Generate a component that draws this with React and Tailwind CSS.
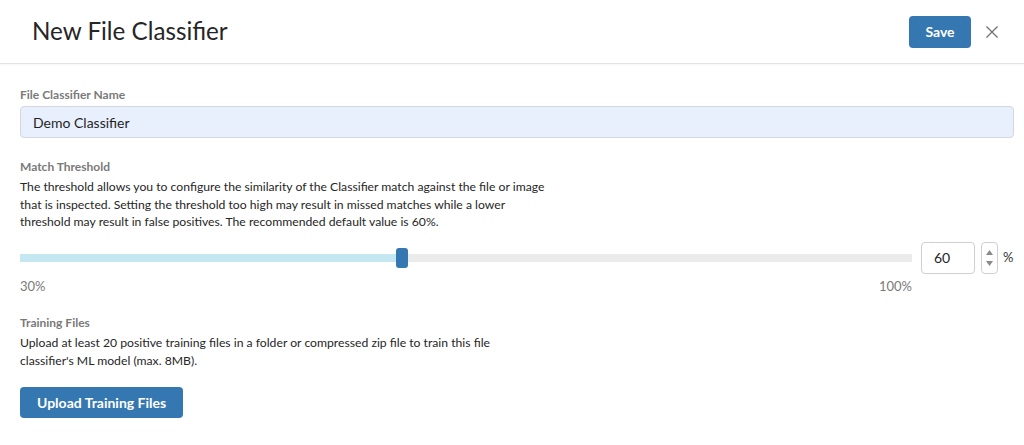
import { useState } from "react";

const MIN = 30;
const MAX = 100;

function Header() {
  return (
    <div className="flex h-[64px] items-center justify-between border-b border-[#e3e3e3] pl-[32px] pr-[26px] shadow-[0_1px_2px_rgba(0,0,0,0.04)]">
      <h1 className="text-[24.2px] font-normal leading-none text-[#262626]">New File Classifier</h1>
      <div className="flex items-center gap-[15px]">
        <button className="h-[32px] w-[62px] rounded-[4px] bg-[#3577b1] text-[14px] font-bold text-white">
          Save
        </button>
        <button className="flex h-[12px] w-[12px] items-center justify-center text-[#707070]" aria-label="Close">
          <svg width="12" height="12" viewBox="0 0 12 12" fill="none" stroke="currentColor" strokeWidth="1.3">
            <path d="M0.5 0.5l11 11M11.5 0.5l-11 11" />
          </svg>
        </button>
      </div>
    </div>
  );
}

function Label({ children }) {
  return <div className="text-[12px] font-bold leading-[16px] text-[#7a7a7a]">{children}</div>;
}

function Spinner() {
  return (
    <div className="flex h-[32px] w-[17px] shrink-0 flex-col items-center justify-center gap-[6px] rounded-[4px] border border-[#cfcfcf] bg-white">
      <svg width="7" height="5" viewBox="0 0 7 5">
        <path d="M3.5 0L7 5H0z" fill="#8a8a8a" />
      </svg>
      <svg width="7" height="5" viewBox="0 0 7 5">
        <path d="M0 0h7L3.5 5z" fill="#8a8a8a" />
      </svg>
    </div>
  );
}

function ThresholdSlider({ value }) {
  const pct = ((value - MIN) / (MAX - MIN)) * 100;
  return (
    <div>
      <div className="flex items-center">
        <div className="relative h-[8px] flex-1 bg-[#ebebeb]">
          <div className="h-full bg-[#c4e7f2]" style={{ width: `${pct}%` }} />
          <div
            className="absolute top-1/2 h-[20px] w-[12px] -translate-x-1/2 -translate-y-1/2 rounded-[3px] bg-[#3577b1]"
            style={{ left: `${pct}%` }}
          />
        </div>
        <div className="ml-[9px] flex h-[32px] w-[54px] shrink-0 items-center rounded-[4px] border border-[#cfcfcf] bg-white pl-[12px] text-[14px] text-[#262626]">
          {value}
        </div>
        <div className="ml-[6px]">
          <Spinner />
        </div>
        <span className="ml-[5px] w-[11px] shrink-0 text-[13px] text-[#333]">%</span>
      </div>
      <div className="mt-[4px] flex pr-[102px] text-[13px] leading-[17px] text-[#7a7a7a]">
        <span>30%</span>
        <span className="ml-auto">100%</span>
      </div>
    </div>
  );
}

export default function App() {
  const [name] = useState("Demo Classifier");

  return (
    <div className="h-[445px] w-[1024px] bg-white font-['Lato','Liberation_Sans',sans-serif] text-[#262626]">
      <Header />
      <div className="pl-[20px] pr-[10px] pt-[23px]">
        <Label>File Classifier Name</Label>
        <div className="mt-[3px] flex h-[32px] items-center rounded-[4px] border border-[#d4d7de] bg-[#e8f0fe] px-[12px] text-[14px] text-[#1f1f1f]">
          {name}
        </div>

        <div className="mt-[21px]">
          <Label>Match Threshold</Label>
        </div>
        <p className="mt-[3px] w-[535px] text-[12.2px] leading-[17.5px] text-[#262626]">
          The threshold allows you to configure the similarity of the Classifier match against the file or image
          that is inspected. Setting the threshold too high may result in missed matches while a lower threshold
          may result in false positives. The recommended default value is 60%.
        </p>

        <div className="mt-[11px]">
          <ThresholdSlider value={60} />
        </div>

        <div className="mt-[20px]">
          <Label>Training Files</Label>
        </div>
        <p className="mt-[3px] w-[500px] text-[12.2px] leading-[18px] text-[#262626]">
          Upload at least 20 positive training files in a folder or compressed zip file to train this file
          classifier's ML model (max. 8MB).
        </p>
        <button className="mt-[17px] h-[31px] rounded-[4px] bg-[#3577b1] px-[17px] text-[14px] font-bold text-white">
          Upload Training Files
        </button>
      </div>
    </div>
  );
}
